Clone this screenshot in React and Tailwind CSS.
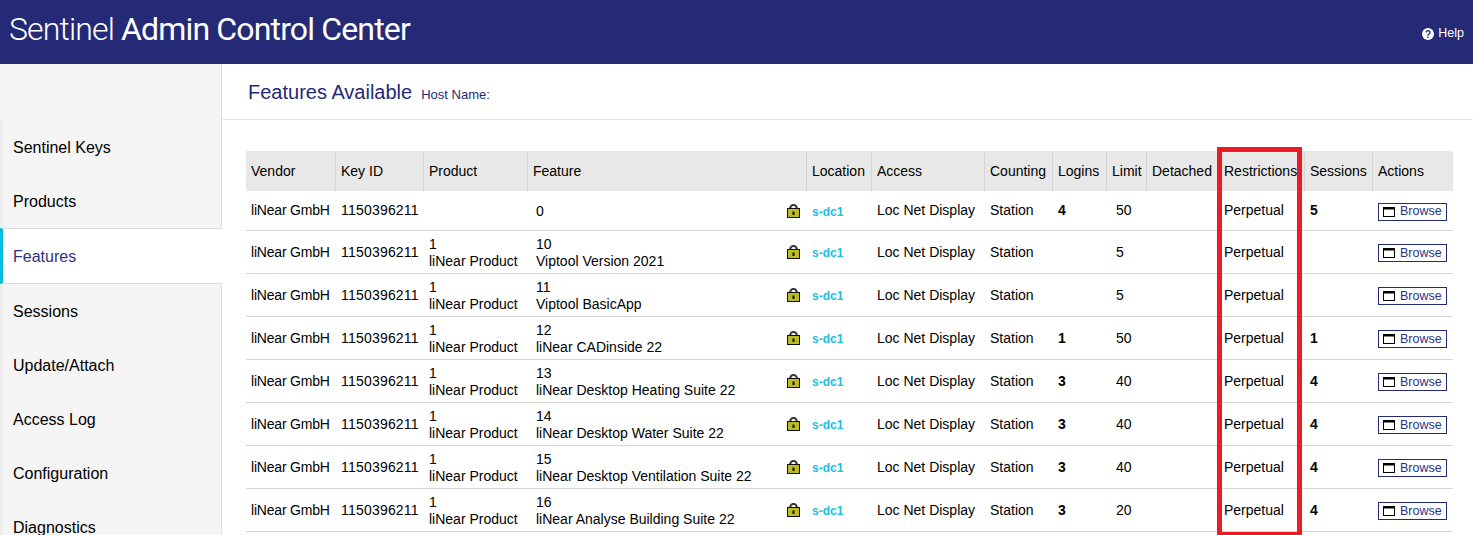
const NAV = ["Sentinel Keys","Products","Features","Sessions","Update/Attach","Access Log","Configuration","Diagnostics"];
const HEAD = ["Vendor","Key ID","Product","Feature","Location","Access","Counting","Logins","Limit","Detached","Restrictions","Sessions","Actions"];
const WIDTHS = [90,88,104,279,65,113,68,54,40,72,86,68,80];
const ROWS = [
  ["", "", "0", "", "4", "50", "5"],
  ["1", "liNear Product", "10", "Viptool Version 2021", "", "5", ""],
  ["1", "liNear Product", "11", "Viptool BasicApp", "", "5", ""],
  ["1", "liNear Product", "12", "liNear CADinside 22", "1", "50", "1"],
  ["1", "liNear Product", "13", "liNear Desktop Heating Suite 22", "3", "40", "4"],
  ["1", "liNear Product", "14", "liNear Desktop Water Suite 22", "3", "40", "4"],
  ["1", "liNear Product", "15", "liNear Desktop Ventilation Suite 22", "3", "40", "4"],
  ["1", "liNear Product", "16", "liNear Analyse Building Suite 22", "3", "20", "4"],
];

function Lock() {
  return (
    <svg width="13" height="14" viewBox="0 0 13 14" className="block shrink-0">
      <path d="M3.2 6V4.3a3.3 3.3 0 0 1 6.6 0V6" fill="none" stroke="#3a3a3a" strokeWidth="2.2" />
      <rect x="0.5" y="4.5" width="12" height="9" fill="#bdbb24" stroke="#111" />
      <rect x="5.5" y="7.5" width="2" height="3.5" fill="#111" />
    </svg>
  );
}

function WindowIcon() {
  return (
    <svg width="12" height="10" viewBox="0 0 12 10" className="block shrink-0">
      <rect x="0.5" y="0.5" width="11" height="9" fill="#fff" stroke="#000" />
      <rect x="0" y="0" width="12" height="2.5" fill="#000" />
    </svg>
  );
}

const TD = "border-b border-[#d4d4d4]";

export default function App() {
  return (
    <div className="relative h-screen overflow-hidden bg-white font-['Liberation_Sans',Arial,sans-serif] text-[14px] text-black">
      <header className="flex h-16 items-center justify-between bg-[#242a75] pl-[9px] pr-[9px] text-white">
        <div className="mb-[6px] font-['Roboto',sans-serif] text-[32px] leading-none tracking-[-0.85px]">
          <span className="font-light">Sentinel </span><span>Admin Control Center</span>
        </div>
        <div className="mt-[3px] flex items-center gap-1 text-[12.5px]">
          <svg width="12" height="12" viewBox="0 0 12 12"><circle cx="6" cy="6" r="6" fill="#fff" /><text x="6" y="9.5" textAnchor="middle" fontSize="10" fontWeight="700" fill="#242a75" fontFamily="Liberation Sans">?</text></svg>
          <span>Help</span>
        </div>
      </header>
      <div className="flex h-[471px]">
        <nav className="w-[222px] shrink-0 border-r border-[#dddddd] bg-[#f5f5f5] pt-14 text-[16px]">
          {NAV.map((n) => n === "Features" ? (
            <div key={n} className="relative -mr-px flex h-[56px] items-center border-y border-[#dddddd] border-l-[3px] border-l-[#00bcdd] bg-white pl-[10px] pt-[2px] text-[#2e3282]">{n}</div>
          ) : (
            <div key={n} className="flex h-[54px] items-center border-l-[3px] border-l-[#eeeeee] pl-[10px] pt-[2px]">{n}</div>
          ))}
        </nav>
        <main className="min-w-0 flex-1">
          <div className="flex h-[56px] items-center border-b border-[#e2e2e2] pl-[26px] text-[#242a75]">
            <span className="text-[20px]">Features Available</span>
            <span className="ml-[9px] mt-[6px] text-[13px] leading-none">Host Name:</span>
          </div>
          <div className="pl-6 pt-[31px]">
            <table className="w-[1207px] table-fixed border-separate border-spacing-0">
              <colgroup>{WIDTHS.map((w, i) => <col key={i} style={{ width: w }} />)}</colgroup>
              <thead>
                <tr className="h-10 bg-[#e8e8e8]">
                  {HEAD.map((h, i) => (
                    <th key={h} className={`pl-[5px] text-left font-normal whitespace-nowrap ${i < 12 ? "border-r border-[#d4d4d4]" : ""}`}>{h}</th>
                  ))}
                </tr>
              </thead>
              <tbody>
                {ROWS.map((r, i) => (
                  <tr key={i} className={i ? "h-[43px]" : "h-10"}>
                    <td className={`${TD} px-[5px] whitespace-nowrap tracking-[-0.2px]`}>liNear GmbH</td>
                    <td className={`${TD} px-[5px] tracking-[0.2px]`}>1150396211</td>
                    <td className={`${TD} px-[5px] pt-[1px] leading-[17px] whitespace-nowrap`}>{r[0]}<br />{r[1]}</td>
                    <td className={`${TD} pl-2 pr-[7px]`}>
                      <div className="flex items-center justify-between">
                        <div className="pt-[1px] leading-[17px]">{r[2]}{r[3] && <><br />{r[3]}</>}</div>
                        <Lock />
                      </div>
                    </td>
                    <td className={`${TD} px-[5px] pt-[2px] text-[12px] font-bold text-[#19bfe0]`}>s-dc1</td>
                    <td className={`${TD} px-[5px] whitespace-nowrap`}>Loc Net Display</td>
                    <td className={`${TD} px-[5px]`}>Station</td>
                    <td className={`${TD} px-[5px] font-bold`}>{r[4]}</td>
                    <td className={`${TD} pl-[9px]`}>{r[5]}</td>
                    <td className={TD} />
                    <td className={`${TD} px-[5px]`}>Perpetual</td>
                    <td className={`${TD} px-[5px] font-bold`}>{r[6]}</td>
                    <td className={`${TD} px-[5px] pt-[2px]`}>
                      <div className="flex h-[18px] w-[69px] items-center gap-[5px] border border-[#242a75] pl-[4px] text-[12.5px] leading-none text-[#2e3282]"><WindowIcon />Browse</div>
                    </td>
                  </tr>
                ))}
              </tbody>
            </table>
          </div>
        </main>
      </div>
      <div className="absolute left-[1217px] top-[147px] h-[390px] w-[85px] border-[5px] border-[#ed1c24]" />
    </div>
  );
}
